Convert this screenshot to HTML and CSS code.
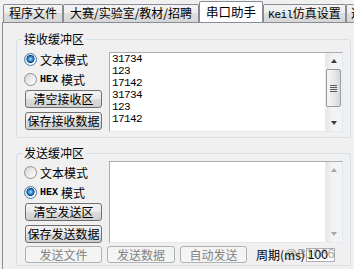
FILE: index.html
```html
<!DOCTYPE html>
<html lang="zh">
<head>
<meta charset="utf-8">
<title>串口助手</title>
<link rel="stylesheet" href="styles.css">
</head>
<body>
<div class="app">
  <div class="tabs">
    <div class="tab t1">程序文件</div>
    <div class="tab t2">大赛/实验室/教材/招聘</div>
    <div class="tab sel">串口助手</div>
    <div class="tab t4"><span class="lat kl">Keil</span>仿真设置</div>
    <div class="tab t5">选项</div>
  </div>
  <div class="panel">
    <fieldset class="group g1">
      <legend>接收缓冲区</legend>
      <div class="grow">
        <div class="side">
          <div class="radio"><span class="dot on"></span>文本模式</div>
          <div class="radio"><span class="dot"></span><span class="lat">HEX</span>模式</div>
          <div class="btn">清空接收区</div>
          <div class="btn">保存接收数据</div>
        </div>
        <div class="area">
          <div class="text">31734<br>123<br>17142<br>31734<br>123<br>17142</div>
          <div class="sb">
            <div class="arr"><span class="up"></span></div>
            <div class="thumb"><span class="grip"></span></div>
            <div class="track"></div>
            <div class="arr"><span class="down"></span></div>
          </div>
        </div>
      </div>
    </fieldset>
    <fieldset class="group g2">
      <legend>发送缓冲区</legend>
      <div class="grow">
        <div class="side">
          <div class="radio"><span class="dot"></span>文本模式</div>
          <div class="radio"><span class="dot on"></span><span class="lat">HEX</span>模式</div>
          <div class="btn">清空发送区</div>
          <div class="btn">保存发送数据</div>
        </div>
        <div class="area a2">
          <div class="text"></div>
          <div class="sb off">
            <div class="arr"><span class="up"></span></div>
            <div class="track"></div>
            <div class="arr"><span class="down"></span></div>
          </div>
        </div>
      </div>
      <div class="brow">
        <div class="btn dis w1">发送文件</div>
        <div class="btn dis w2">发送数据</div>
        <div class="btn dis w3">自动发送</div>
        <div class="period">周期(ms)</div>
        <div class="input">100</div>
      </div>
    </fieldset>
  </div>
  <div class="wm">@B1066</div>
</div>
</body>
</html>
```

FILE: styles.css
```css
* { box-sizing: border-box; }
html, body {
  margin: 0;
  padding: 0;
}
body {
  width: 354px;
  height: 269px;
  overflow: hidden;
  background: #f0f0f0;
  font-family: "Noto Sans CJK SC", "Noto Sans", sans-serif;
  font-size: 12px;
  color: #000;
}
.app {
  position: relative;
  width: 354px;
  height: 269px;
  overflow: hidden;
}
.lat {
  font-family: "Liberation Mono", monospace;
  font-size: 10px;
  font-weight: bold;
}
.lat.kl {
  font-size: 11px;
  font-weight: normal;
  letter-spacing: -0.5px;
}

/* tabs */
.tabs {
  display: flex;
  align-items: flex-end;
  height: 22px;
  padding-left: 3px;
  overflow: hidden;
}
.tab {
  flex: none;
  height: 18px;
  line-height: 16px;
  text-align: center;
  white-space: nowrap;
  overflow: hidden;
  border: 1px solid #898c95;
  border-bottom: none;
  border-radius: 2px 2px 0 0;
  background: linear-gradient(#f3f3f3, #ececec 50%, #dedede 50%, #d6d6d6);
}
.t1 { width: 60px; }
.t2 { width: 136px; }
.t4 { width: 83px; }
.t5 { width: 8px; text-align: left; padding-left: 4px; border-right: none; }
.sel {
  position: relative;
  z-index: 1;
  width: 64px;
  height: 22px;
  line-height: 19px;
  margin-bottom: -1px;
  background: #fff;
  font-size: 12.5px;
}

/* panel */
.panel {
  margin-left: 2px;
  width: 352px;
  height: 250px;
  border: 1px solid #898c95;
  border-right: none;
  background: #f0f0f0;
  padding: 10px 0 0 13px;
}
.group {
  margin: 0;
  width: 335px;
  min-width: 0;
  border: 1px solid #d5dfe5;
  border-radius: 3px;
  padding: 7px 7px 5px 8px;
}
.group legend {
  font-size: 12px;
  line-height: 12px;
  padding: 0 2px;
  margin-left: -3px;
}
.g2 {
  margin-top: 9px;
  padding: 2px 7px 2px 8px;
}
.grow {
  display: flex;
  align-items: flex-start;
  gap: 7px;
}
.side {
  width: 77px;
  display: flex;
  flex-direction: column;
}
.g2 .side { padding-top: 4px; }
.radio {
  display: flex;
  align-items: center;
  gap: 3px;
  height: 14px;
  margin-left: -1px;
  margin-bottom: 6px;
  white-space: nowrap;
}
.radio + .radio { margin-bottom: 4px; }
.dot {
  width: 13px;
  height: 13px;
  border-radius: 50%;
  border: 1px solid #8e8f8f;
  background: linear-gradient(135deg, #d4d4d4, #f4f4f4 70%, #fff);
  flex: none;
}
.dot.on {
  border-color: #3c7fb1;
  background:
    radial-gradient(circle at 50% 45%, #bfe6ff 0, #4aa3e8 1.5px, #1a5fa6 3.2px, #0f3f78 3.8px, transparent 4.3px),
    linear-gradient(135deg, #d4d4d4, #f4f4f4 70%, #fff);
}
.btn {
  height: 18px;
  line-height: 16px;
  text-align: center;
  white-space: nowrap;
  border: 1px solid #707070;
  border-radius: 3px;
  background: linear-gradient(#f2f2f2, #ebebeb 50%, #dddddd 50%, #cfcfcf);
}
.btn + .btn { margin-top: 4px; }
.btn.dis {
  border-color: #adb2b5;
  background: #f4f4f4;
  color: #838383;
  margin-top: 0;
}

/* text areas */
.area {
  width: 234px;
  height: 80px;
  display: flex;
  background: #fff;
  border: 1px solid;
  border-color: #abadb3 #e3e9ef #e3e9ef #abadb3;
}
.a2 { height: 82px; }
.text {
  flex: 1;
  padding: 0 0 0 2px;
  font-family: "Liberation Mono", monospace;
  font-size: 11px;
  letter-spacing: -0.6px;
  line-height: 12px;
}
.sb {
  width: 17px;
  display: flex;
  flex-direction: column;
  background: linear-gradient(90deg, #e6e6e6, #f3f3f3 40%, #f3f3f3);
  border-left: 1px solid #ececec;
}
.arr {
  height: 16px;
  display: flex;
  align-items: center;
  justify-content: center;
}
.up, .down {
  width: 0;
  height: 0;
  border-left: 3.5px solid transparent;
  border-right: 3.5px solid transparent;
}
.up { border-bottom: 4px solid #3a3a3a; }
.down { border-top: 4px solid #3a3a3a; }
.sb.off .up { border-bottom-color: #a8a8a8; }
.sb.off .down { border-top-color: #a8a8a8; }
.thumb {
  height: 38px;
  margin: 0 1px 0 0;
  border: 1px solid #9b9b9b;
  border-radius: 2px;
  background: linear-gradient(90deg, #f6f6f6, #e9e9e9 50%, #d6d6d6);
  display: flex;
  align-items: center;
  justify-content: center;
}
.grip {
  width: 7px;
  height: 7px;
  background: repeating-linear-gradient(#5c5c5c 0 1px, transparent 1px 2px);
}
.track { flex: 1; }

/* bottom row */
.brow {
  display: flex;
  align-items: center;
  gap: 5px;
  margin-top: 3px;
  height: 17px;
}
.brow .btn { height: 17px; line-height: 15px; }
.w1 { width: 77px; }
.w2 { width: 68px; }
.w3 { width: 67px; }
.period {
  margin-left: 4px;
  white-space: nowrap;
}
.input {
  width: 29px;
  height: 14px;
  line-height: 12px;
  margin-left: -4px;
  background: #fff;
  border: 1px solid #abadb3;
  padding-left: 1px;
  font-family: "Liberation Sans", sans-serif;
}
.wm {
  position: absolute;
  left: 284px;
  top: 246px;
  font-family: "Liberation Sans", sans-serif;
  font-size: 13px;
  color: rgba(90, 90, 90, 0.55);
  pointer-events: none;
}
```
